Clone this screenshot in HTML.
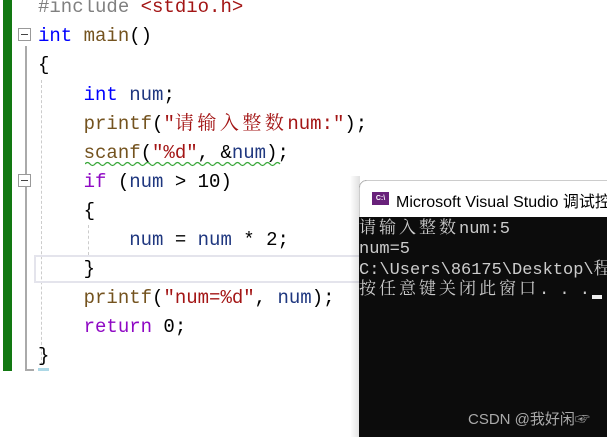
<!DOCTYPE html>
<html><head><meta charset="utf-8"><style>
body{margin:0;width:607px;height:437px;background:#fff;position:relative;overflow:hidden;font-family:"Liberation Mono","Noto Serif CJK SC",monospace}
.l{position:absolute;left:38px;font-size:19px;line-height:29px;white-space:pre;color:#000;height:29px}
.k{color:#0000ff}.p{color:#8f08c4}.f{color:#74531f}.s{color:#a31515}.v{color:#1f377f}.g{color:#808080}
.fold{position:absolute;left:18px;width:13px;height:13px;border:1px solid #999;background:#fff;box-sizing:border-box}
.fold:after{content:"";position:absolute;left:2px;right:2px;top:5px;height:1px;background:#444}
.con{position:absolute;left:0;font-size:17px;line-height:20.5px;color:#ccc;white-space:pre;font-family:"Liberation Mono","Noto Serif CJK SC",monospace}
.cj{letter-spacing:3.5px}.cc{letter-spacing:3px}
</style></head><body>
<div style="position:absolute;left:3px;top:0;width:9px;height:371px;background:#127812"></div>
<div style="position:absolute;left:25px;top:46px;width:2px;height:324px;background:#aaa"></div>
<div style="position:absolute;left:25px;top:369px;width:9px;height:2px;background:#aaa"></div>
<div style="position:absolute;left:38px;top:368px;width:11px;height:3px;background:#add8e6"></div>
<div style="position:absolute;left:41px;top:80px;width:0;height:285px;border-left:1px dashed #ccc"></div>
<div style="position:absolute;left:88px;top:225px;width:0;height:30px;border-left:1px dashed #ccc"></div>
<div style="position:absolute;left:34px;top:255px;width:330px;height:24px;border:2px solid #e4e4ec;border-right:none"></div>
<div class="fold" style="top:28px"></div>
<div class="fold" style="top:174px"></div>
<div class="l g" style="top:-7px">#include <span class="s">&lt;stdio.h&gt;</span></div>
<div class="l" style="top:22px"><span class="k">int</span> <span class="f">main</span>()</div>
<div class="l" style="top:51px">{</div>
<div class="l" style="top:81px">    <span class="k">int</span> <span class="v">num</span>;</div>
<div class="l" style="top:110px">    <span class="f">printf</span>(<span class="s">"<span class="cj">请输入整数</span>num:"</span>);</div>
<div class="l" style="top:139px">    <span class="f">scanf</span>(<span class="s">"%d"</span>, &amp;<span class="v">num</span>);</div>
<svg style="position:absolute;left:85px;top:161px" width="200" height="6"><path d="M0 3 q2.5 -3 5 0 t5 0 t5 0 t5 0 t5 0 t5 0 t5 0 t5 0 t5 0 t5 0 t5 0 t5 0 t5 0 t5 0 t5 0 t5 0 t5 0 t5 0 t5 0 t5 0 t5 0 t5 0 t5 0 t5 0 t5 0 t5 0 t5 0 t5 0 t5 0 t5 0 t5 0 t5 0 t5 0 t5 0 t5 0 t5 0 t5 0 t5 0 t5 0" stroke="#3aa83a" fill="none" stroke-width="1.3"/></svg>
<div class="l" style="top:168px">    <span class="p">if</span> (<span class="v">num</span> &gt; 10)</div>
<div class="l" style="top:197px">    {</div>
<div class="l" style="top:226px">        <span class="v">num</span> = <span class="v">num</span> * 2;</div>
<div class="l" style="top:255px">    }</div>
<div class="l" style="top:284px">    <span class="f">printf</span>(<span class="s">"num=%d"</span>, <span class="v">num</span>);</div>
<div class="l" style="top:313px">    <span class="p">return</span> 0;</div>
<div class="l" style="top:342px">}</div>
<div style="position:absolute;left:350px;top:176px;width:10px;height:261px;background:linear-gradient(to right,rgba(0,0,0,0),rgba(0,0,0,0.12))"></div>
<div style="position:absolute;left:359px;top:180px;width:260px;height:257px;background:#0c0c0c;border-radius:8px 0 0 0;overflow:hidden">
 <div style="height:37px;background:#fff;position:relative;border-top:1px solid #ccc;border-left:1px solid #ccc;border-radius:8px 0 0 0;box-sizing:border-box">
  <div style="position:absolute;left:12px;top:11px;width:17px;height:13px;background:#68217a;color:#fff;font:bold 7px 'Liberation Sans',sans-serif;line-height:13px;text-align:center">C:\</div>
  <div style="position:absolute;left:36px;top:7px;font:16px 'Liberation Sans','Noto Sans CJK SC',sans-serif;color:#000;white-space:nowrap">Microsoft Visual Studio 调试控制台</div>
 </div>
 <div style="position:relative;top:3px">
  <div class="con" style="top:0"><span class="cc">请输入整数</span>num:5</div>
  <div class="con" style="top:20px">num=5</div>
  <div class="con" style="top:41px">C:\Users\86175\Desktop\<span class="cc">程序</span></div>
  <div class="con" style="top:61px"><span class="cc">按任意键关闭此窗口</span>. . .</div>
  <div style="position:absolute;left:233px;top:75px;width:10px;height:4px;background:#eee"></div>
 </div>
 <div style="position:absolute;left:109px;top:228px;font:15px 'Liberation Sans','Noto Sans CJK SC',sans-serif;color:#aaa;white-space:nowrap">CSDN @我好闲☞</div>
</div>
</body></html>
